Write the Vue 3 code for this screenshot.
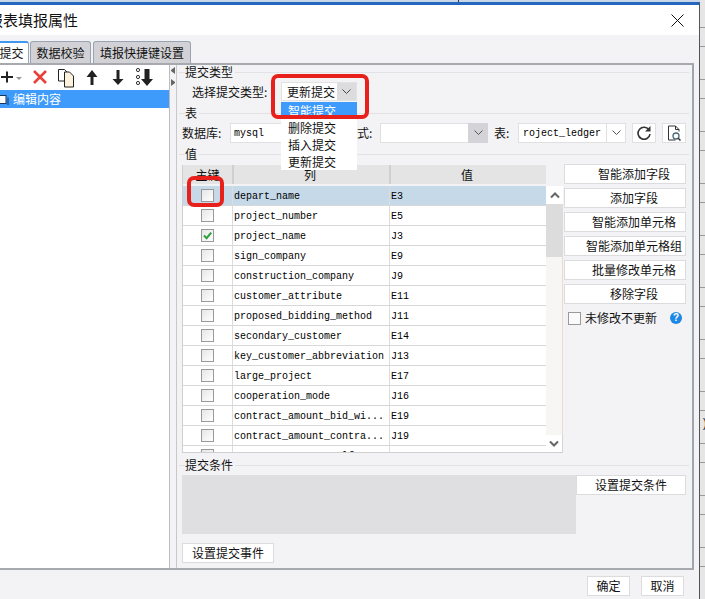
<script setup>
const rows = [
  { name: 'depart_name', value: 'E3', selected: true, marked: true },
  { name: 'project_number', value: 'E5' },
  { name: 'project_name', value: 'J3', checked: true },
  { name: 'sign_company', value: 'E9' },
  { name: 'construction_company', value: 'J9' },
  { name: 'customer_attribute', value: 'E11' },
  { name: 'proposed_bidding_method', value: 'J11' },
  { name: 'secondary_customer', value: 'E14' },
  { name: 'key_customer_abbreviation', value: 'J13' },
  { name: 'large_project', value: 'E17' },
  { name: 'cooperation_mode', value: 'J16' },
  { name: 'contract_amount_bid_wi...', value: 'E19' },
  { name: 'contract_amount_contra...', value: 'J19' },
  { name: 'contract_amount_self...', value: 'E21' },
]
const actions = ['智能添加字段', '添加字段', '智能添加单元格', '智能添加单元格组', '批量修改单元格', '移除字段']
const options = ['智能提交', '删除提交', '插入提交', '更新提交']
</script>

<template>
  <div class="page">
    <div class="topstrip"><span class="tick"></span></div>
    <div class="desk">
      <div class="dialog">
        <div class="titlebar">
          <span class="title">报表填报属性</span>
          <svg class="close" width="13" height="13" viewBox="0 0 13 13"><path d="M0.5 0.5L12.5 12.5M12.5 0.5L0.5 12.5" stroke="#111" stroke-width="1" fill="none"/></svg>
        </div>

        <div class="tabs">
          <div class="tab active">提交</div>
          <div class="tab second">数据校验</div>
          <div class="tab third">填报快捷键设置</div>
        </div>

        <div class="panel">
          <div class="tree">
            <div class="toolbar">
              <svg width="26" height="24" viewBox="0 0 26 24"><path d="M0 12h12M6 6.5v11" stroke="#222" stroke-width="2" fill="none"/><path d="M15 12h6l-3 3z" fill="#999"/></svg>
              <svg width="26" height="24" viewBox="0 0 26 24"><path d="M7 6L19 18M19 6L7 18" stroke="#e8423a" stroke-width="2.6" fill="none"/></svg>
              <svg width="26" height="24" viewBox="0 0 26 24"><path d="M5.5 4.5h6l2.5 2.5v9h-8.5z" fill="#fff" stroke="#222"/><path d="M11.5 8.5h5l4 4v11h-9z" transform="translate(0 -1.5)" fill="#fdf3dc" stroke="#222"/></svg>
              <svg width="26" height="24" viewBox="0 0 26 24"><path d="M13 5l5.5 7h-4v8h-3v-8h-4z" fill="#222"/></svg>
              <svg width="26" height="24" viewBox="0 0 26 24"><path d="M11.5 5h3v9h4l-5.5 6-5.5-6h4z" fill="#222"/></svg>
              <svg width="26" height="24" viewBox="0 0 26 24"><circle cx="7" cy="5" r="1.6" fill="none" stroke="#333"/><circle cx="7" cy="12" r="1.6" fill="none" stroke="#333"/><circle cx="7" cy="18" r="1.6" fill="none" stroke="#333"/><path d="M13.5 4h5v10h3.5l-6 7-6-7h3.5z" fill="#222"/></svg>
            </div>
            <div class="tree-item">
              <svg class="tree-icon" width="10" height="11" viewBox="0 0 10 11"><rect x="-3" y="1.5" width="9" height="8" fill="#fff" stroke="#16365c"/><path d="M8 3.5v8h-9" stroke="#16365c" fill="none"/></svg>
              <span>编辑内容</span>
            </div>
          </div>

          <div class="splitter">
            <span class="arrow left"></span>
            <span class="arrow right"></span>
          </div>

          <div class="content">
            <div class="legend"><span>提交类型</span></div>
            <div class="type-row">
              <span class="type-label">选择提交类型:</span>
              <div class="type-combo">
                <span class="type-value">更新提交</span>
                <span class="type-arrow">
                  <svg width="9" height="6" viewBox="0 0 9 6"><path d="M0.5 0.5L4.5 4.5L8.5 0.5" fill="none" stroke="#444"/></svg>
                </span>
                <ul class="dropdown">
                  <li v-for="(o, i) in options" :key="o" :class="{ current: i === 0 }">{{ o }}</li>
                </ul>
                <div class="mark mark-combo"></div>
              </div>
            </div>

            <div class="legend second-legend"><span>表</span></div>
            <div class="db-row">
              <span class="db-label">数据库:</span>
              <div class="field db-field mono">mysql</div>
              <span class="mode-label">模式:</span>
              <div class="field mode-field">
                <span class="mode-arrow">
                  <svg width="9" height="6" viewBox="0 0 9 6"><path d="M0.5 0.5L4.5 4.5L8.5 0.5" fill="none" stroke="#555"/></svg>
                </span>
              </div>
              <span class="table-label">表:</span>
              <div class="field table-field">
                <span class="table-value mono">roject_ledger</span>
                <span class="table-arrow">
                  <svg width="9" height="6" viewBox="0 0 9 6"><path d="M0.5 0.5L4.5 4.5L8.5 0.5" fill="none" stroke="#555"/></svg>
                </span>
              </div>
              <div class="icon-btn">
                <svg width="16" height="16" viewBox="0 0 16 16"><path d="M13.2 5.2A6 6 0 1 0 14 9" fill="none" stroke="#333" stroke-width="1.6"/><path d="M14.5 1v5.5H9z" fill="#333"/></svg>
              </div>
              <div class="icon-btn search">
                <svg width="16" height="16" viewBox="0 0 16 16"><path d="M2.5 1h7l3.5 3.5v2M2.5 1v14h7" fill="none" stroke="#333"/><path d="M9.5 1v3.5H13" fill="none" stroke="#333"/><circle cx="10" cy="11" r="3" fill="none" stroke="#4a6a7c" stroke-width="1.3"/><path d="M12.2 13.2L14.5 15.5" stroke="#333" stroke-width="1.5"/></svg>
              </div>
            </div>

            <div class="legend third-legend"><span>值</span></div>
            <div class="middle">
              <div class="grid-wrap">
                <div class="grid">
                  <div class="grid-head">
                    <div class="hcell">主键</div>
                    <div class="hcell">列</div>
                    <div class="hcell">值</div>
                  </div>
                  <div class="head-gap"></div>
                  <div v-for="r in rows" :key="r.name" class="grid-row" :class="{ selected: r.selected }">
                    <div class="cell check-cell">
                      <span class="check">
                        <svg v-if="r.checked" width="11" height="11" viewBox="0 0 11 11"><path d="M2 5.5L4.6 8.2L9.2 2.6" fill="none" stroke="#2f9e3f" stroke-width="2"/></svg>
                      </span>
                      <div v-if="r.marked" class="mark mark-check"></div>
                    </div>
                    <div class="cell mono">{{ r.name }}</div>
                    <div class="cell mono">{{ r.value }}</div>
                  </div>
                </div>
                <div class="scroll">
                  <div class="scroll-top"></div>
                  <div class="scroll-btn up">
                    <svg width="10" height="7" viewBox="0 0 10 7"><path d="M1 5.5L5 1.5L9 5.5" fill="none" stroke="#666" stroke-width="2"/></svg>
                  </div>
                  <div class="thumb"></div>
                  <div class="track"></div>
                  <div class="scroll-btn down">
                    <svg width="10" height="7" viewBox="0 0 10 7"><path d="M1 1.5L5 5.5L9 1.5" fill="none" stroke="#666" stroke-width="2"/></svg>
                  </div>
                </div>
              </div>

              <div class="actions">
                <div v-for="a in actions" :key="a" class="action">{{ a }}</div>
                <div class="skip-row">
                  <span class="skip-box"></span>
                  <span>未修改不更新</span>
                  <span class="help">?</span>
                </div>
              </div>
            </div>

            <div class="legend fourth-legend"><span>提交条件</span></div>
            <div class="cond-row">
              <div class="cond-area"></div>
              <div class="btn cond-btn">设置提交条件</div>
            </div>
            <div class="btn event-btn">设置提交事件</div>
          </div>
        </div>

        <div class="footer">
          <div class="btn foot-btn">确定</div>
          <div class="btn foot-btn">取消</div>
        </div>
      </div>

      <div class="backdrop"><span class="stray">)</span></div>
    </div>
  </div>
</template>

<style>
html, body { margin: 0; padding: 0; background: #fff; }
</style>

<style scoped>
* { box-sizing: border-box; }
.page {
  width: 705px;
  height: 599px;
  overflow: hidden;
  font-family: "Noto Sans CJK SC", "Liberation Sans", sans-serif;
  font-size: 12px;
  line-height: 14px;
  color: #111;
  display: flex;
  flex-direction: column;
}
.mono { font-family: "Liberation Mono", monospace; font-size: 10px; color: #000; padding-top: 2px; }
.topstrip { height: 2px; background: #c9d6ea; position: relative; flex: none; }
.tick { position: absolute; left: 458px; top: 0; width: 1px; height: 2px; background: #333; }
.desk { flex: 1; display: flex; min-height: 0; }
.dialog {
  width: 700px;
  height: 597px;
  background: #f3f3f5;
  border-top: 3px solid #2467bd;
  border-right: 1px solid #555;
  display: flex;
  flex-direction: column;
  overflow: hidden;
  flex: none;
}
.backdrop {
  flex: 1;
  position: relative;
  margin-top: -2px;
  background: repeating-linear-gradient(180deg, #e6e6e6 0 27px, #9a9a9a 27px 28px, #e6e6e6 28px 46px, #9a9a9a 46px 47px, #e6e6e6 47px 52px);
}
.stray { position: absolute; left: 1px; top: 417px; font-family: "Liberation Mono", monospace; font-size: 12px; color: #333; }

.titlebar {
  height: 30px;
  background: #fff;
  flex: none;
  display: flex;
  align-items: center;
  justify-content: space-between;
  padding-right: 15px;
}
.title { font-size: 15px; line-height: 18px; margin-left: -12px; }
.close { margin-top: 1px; }

.tabs { height: 28px; padding-top: 6px; display: flex; align-items: stretch; margin-left: -6px; flex: none; }
.tab {
  height: 22px;
  display: flex;
  align-items: center;
  justify-content: center;
  background: #d2d2d6;
  border: 1px solid #98a4b4;
  border-bottom: none;
  border-radius: 3px 3px 0 0;
}
.tab.active { width: 35px; background: #fff; border-top: 2px solid #3f97f0; margin-right: 1px; }
.tab.second { width: 61px; margin-right: 2px; }
.tab.third { width: 98px; }

.panel {
  height: 507px;
  flex: none;
  width: 696px;
  margin-left: -2px;
  border: 2px solid #a6a9ad;
  border-right-color: #9ea6b0;
  display: flex;
}
.tree { width: 170px; background: #fff; border-right: 1px solid #bdbdbd; flex: none; }
.toolbar { height: 24px; padding-left: 1px; display: flex; }
.toolbar svg { flex: none; }
.tree-item {
  margin-top: 1px;
  height: 18px;
  background: #3f9bfb;
  color: #fff;
  display: flex;
  align-items: center;
}
.tree-icon { flex: none; margin-right: 3px; }
.splitter { width: 6px; flex: none; display: flex; flex-direction: column; align-items: center; padding-top: 2px; gap: 5px; background: #f3f3f5; }
.arrow { width: 0; height: 7px; border-top: 3.5px solid transparent; border-bottom: 3.5px solid transparent; flex: none; }
.arrow.left { border-right: 4px solid #666; }
.arrow.right { border-left: 4px solid #666; }

.content { flex: 1; min-width: 0; border-left: 1px solid #c8c8c8; padding-left: 0; }
.legend { margin: 0 3px 0 2px; height: 14px; display: flex; align-items: center; }
.legend::before { content: ""; width: 6px; height: 1px; background: #e2e2e4; flex: none; }
.legend::after { content: ""; flex: 1; height: 1px; background: #e2e2e4; margin-left: 2px; }
.second-legend { margin-top: 5px; }
.third-legend { margin-top: 4px; }
.fourth-legend { margin-top: 5px; }

.type-row { margin-top: 3px; height: 19px; padding-left: 15px; display: flex; align-items: center; }
.type-label { width: 89px; flex: none; }
.type-combo { position: relative; width: 76px; height: 19px; display: flex; background: #fff; border: 1px solid #e2e2e2; }
.type-value { flex: 1; padding-left: 5px; display: flex; align-items: center; }
.type-arrow { width: 19px; background: #dcdcde; display: flex; align-items: center; justify-content: center; }
.dropdown {
  position: absolute;
  left: -1px;
  top: 19px;
  width: 76px;
  margin: 0;
  padding: 0;
  list-style: none;
  background: #fff;
  z-index: 3;
}
.dropdown li { height: 17px; line-height: 17px; padding-left: 7px; }
.dropdown li.current { background: #3f9bfb; color: #fff; }
.mark { position: absolute; border: 4px solid #e8201c; border-radius: 7px; z-index: 4; pointer-events: none; }
.mark-combo { left: -11px; top: -9px; width: 98px; height: 45px; }
.mark-check { left: 4px; top: -10px; width: 37px; height: 31px; }

.db-row { margin-top: 3px; height: 20px; padding-left: 5px; display: flex; align-items: center; }
.db-label { width: 48px; flex: none; }
.field { height: 20px; background: #fff; border: 1px solid #e0e0e2; display: flex; align-items: center; flex: none; }
.db-field { width: 112px; padding-left: 3px; }
.mode-label { width: 38px; padding-left: 3px; flex: none; }
.mode-field { width: 108px; justify-content: flex-end; border-right: none; }
.mode-arrow { width: 20px; height: 20px; background: #d4d4d8; display: flex; align-items: center; justify-content: center; }
.table-label { width: 24px; margin-left: 6px; flex: none; }
.table-field { width: 108px; }
.table-value { flex: 1; padding-left: 4px; }
.table-arrow { width: 19px; height: 18px; border-left: 1px solid #e0e0e2; display: flex; align-items: center; justify-content: center; }
.icon-btn { width: 24px; height: 20px; margin-left: 6px; background: #fff; border: 1px solid #e0e0e2; display: flex; align-items: center; justify-content: center; flex: none; }

.middle { margin-top: 4px; padding-left: 5px; display: flex; align-items: flex-start; }
.grid-wrap { width: 381px; height: 288px; display: flex; flex: none; border-bottom: 1px solid #cfcfcf; }
.grid { width: 364px; overflow: hidden; border-left: 1px solid #cfcfcf; flex: none; background: #fff; }
.grid-head { height: 19px; display: grid; grid-template-columns: 49px 157px 157px; background: #e4e4e4; }
.hcell { display: flex; align-items: center; justify-content: center; height: 19px; }
.hcell + .hcell { border-left: 2px solid #cfcfcf; padding-right: 3px; }
.head-gap { height: 2px; background: #f3f3f5; }
.grid-row {
  height: 20px;
  display: grid;
  grid-template-columns: 49px 157px 157px;
  border-bottom: 1px solid #d8d8d8;
  background: #fff;
}
.grid-row.selected { background: #c5d9e8; }
.cell { display: flex; align-items: center; padding-left: 1px; white-space: nowrap; overflow: hidden; line-height: 19px; }
.cell + .cell { border-left: 1px solid #dcdcdc; }
.check-cell { justify-content: center; position: relative; padding-left: 0; overflow: visible; padding-right: 1px; }
.check {
  width: 13px;
  height: 13px;
  border: 1px solid #999;
  background: linear-gradient(135deg, #e6e6e6, #fff);
  display: flex;
  align-items: center;
  justify-content: center;
}
.scroll { width: 17px; height: 287px; display: flex; flex-direction: column; flex: none; }
.scroll-top { height: 21px; background: #f3f3f5; flex: none; }
.scroll-btn { height: 18px; background: #fff; display: flex; align-items: center; justify-content: center; flex: none; }
.scroll-btn.down { height: 17px; border-right: 1px solid #d5d5d5; }
.thumb { height: 53px; background: #dcdcdc; flex: none; }
.track { flex: 1; background: #f7f6f3; border-right: 1px solid #e3dfd6; }

.actions { margin-left: 1px; margin-top: -1px; width: 122px; display: flex; flex-direction: column; gap: 4px; flex: none; }
.action {
  height: 20px;
  background: #fff;
  border: 1px solid #dcdcde;
  display: flex;
  align-items: center;
  justify-content: center;
  padding-left: 18px;
  white-space: nowrap;
}
.skip-row { margin-top: 3px; display: flex; align-items: center; padding-left: 4px; height: 14px; }
.skip-box { width: 13px; height: 13px; border: 1px solid #999; background: #fafafa; margin-right: 4px; flex: none; }
.help {
  margin-left: 13px;
  width: 12px;
  height: 12px;
  border-radius: 50%;
  background: #1e88e5;
  color: #fff;
  font-family: "Liberation Sans", sans-serif;
  font-weight: 700;
  font-size: 10px;
  line-height: 12px;
  text-align: center;
  flex: none;
}

.btn { background: #fff; border: 1px solid #dcdcde; display: flex; align-items: center; justify-content: center; height: 20px; }
.cond-row { margin-top: 3px; padding-left: 5px; display: flex; align-items: flex-start; }
.cond-area { width: 394px; height: 59px; background: #dfdfe1; flex: none; }
.cond-btn { width: 110px; flex: none; }
.event-btn { width: 92px; margin: 9px 0 0 5px; }

.footer { height: 29px; flex: none; padding: 6px 15px 0 0; display: flex; justify-content: flex-end; gap: 11px; }
.foot-btn { width: 43px; }
</style>
